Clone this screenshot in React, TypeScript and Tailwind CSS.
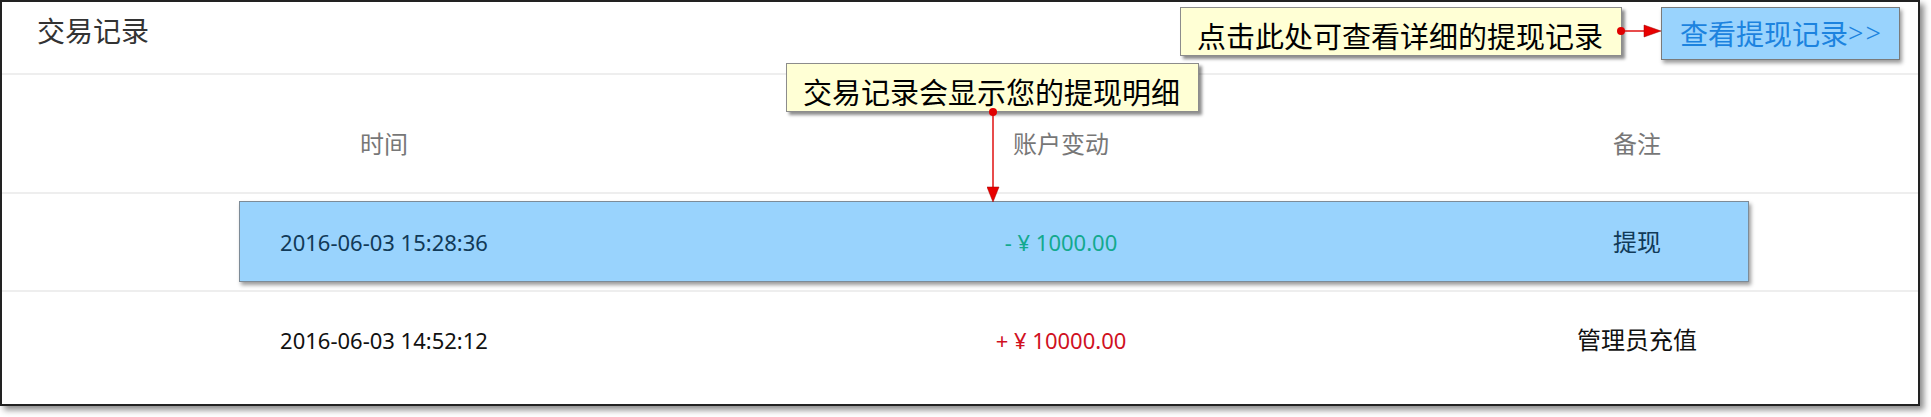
import React from "react";

const font = { fontFamily: '"Noto Sans", "Noto Sans CJK SC", sans-serif' };

type Row = { time: string; amount: string; note: string; kind: "out" | "in" };

const rows: Row[] = [
  { time: "2016-06-03 15:28:36", amount: "- ¥ 1000.00", note: "提现", kind: "out" },
  { time: "2016-06-03 14:52:12", amount: "+ ¥ 10000.00", note: "管理员充值", kind: "in" },
];

function Callout({ className, children }: { className: string; children: React.ReactNode }) {
  return (
    <div
      className={`absolute h-[49px] border border-[#8c8c8c] bg-[#ffffd5] pl-[16px] pt-[11px] text-[29px] leading-[36px] text-black shadow-[3px_3px_3px_rgba(0,0,0,0.45)] ${className}`}
    >
      {children}
    </div>
  );
}

export default function App() {
  return (
    <div className="h-[417px] w-[1931px] bg-white" style={font}>
      <div className="relative h-[406px] w-[1920px] border-2 border-[#222] bg-white shadow-[4px_4px_6px_rgba(0,0,0,0.45)]">
        {/* card title */}
        <div className="h-[73px] border-b-2 border-[#eeeeee] pl-[35px] pt-[11px] text-[28px] leading-[36px] text-[#333]">
          交易记录
        </div>

        {/* table head */}
        <div className="grid h-[119px] grid-cols-[764px_590px_1fr] border-b-2 border-[#eeeeee] pt-[51px] text-center text-[24px] leading-[36px] text-[#777]">
          <div>时间</div>
          <div>账户变动</div>
          <div>备注</div>
        </div>

        {/* rows */}
        {rows.map((r, i) => {
          const active = i === 0;
          return (
            <div
              key={r.time}
              className={`relative grid grid-cols-[764px_590px_1fr] items-center text-center ${
                i < rows.length - 1 ? "h-[98px] border-b-2 border-[#eeeeee]" : "h-[96px]"
              }`}
            >
              {active && (
                <div className="absolute left-[237px] top-[7px] h-[81px] w-[1510px] border border-[#7d8b97] bg-[#99d3fd] shadow-[2px_3px_4px_rgba(0,0,0,0.4)]" />
              )}
              <div className={`relative text-[22px] ${active ? "text-[#113a58]" : "text-[#111]"}`}>{r.time}</div>
              <div
                className={`relative text-[22px] ${
                  r.kind === "out" ? "text-[#13a98e]" : "text-[#d0111f]"
                }`}
              >
                {r.amount}
              </div>
              <div className={`relative text-[24px] ${active ? "text-[#113a58]" : "text-[#111]"}`}>{r.note}</div>
            </div>
          );
        })}

        {/* annotations */}
        <Callout className="left-[784px] top-[61px] w-[413px]">交易记录会显示您的提现明细</Callout>
        <svg className="absolute left-[985px] top-[104px]" width="14" height="98" viewBox="0 0 14 98">
          <line x1="6" y1="6" x2="6" y2="84" stroke="#e01010" strokeWidth="1.5" />
          <circle cx="6" cy="6" r="4" fill="#e00000" />
          <polygon points="0,81 12,81 6,96" fill="#e80000" stroke="#a00000" strokeWidth="0.5" />
        </svg>

        <Callout className="left-[1178px] top-[5px] w-[442px]">点击此处可查看详细的提现记录</Callout>
        <svg className="absolute left-[1614px] top-[22px]" width="46" height="14" viewBox="0 0 46 14">
          <line x1="5" y1="7" x2="30" y2="7" stroke="#e01010" strokeWidth="1.5" />
          <circle cx="5" cy="7" r="4" fill="#e00000" />
          <polygon points="28,1 28,13 45,7" fill="#e80000" stroke="#a00000" strokeWidth="0.5" />
        </svg>

        <div className="absolute left-[1659px] top-[5px] flex h-[53px] w-[239px] items-center border border-[#7a7a7a] bg-[#99d3fd] pl-[18px] text-[28px] text-[#1c83df] shadow-[2px_3px_4px_rgba(0,0,0,0.4)]">
          查看提现记录
          <span className="text-[27px] font-light tracking-[2px]">&gt;&gt;</span>
        </div>
      </div>
    </div>
  );
}
